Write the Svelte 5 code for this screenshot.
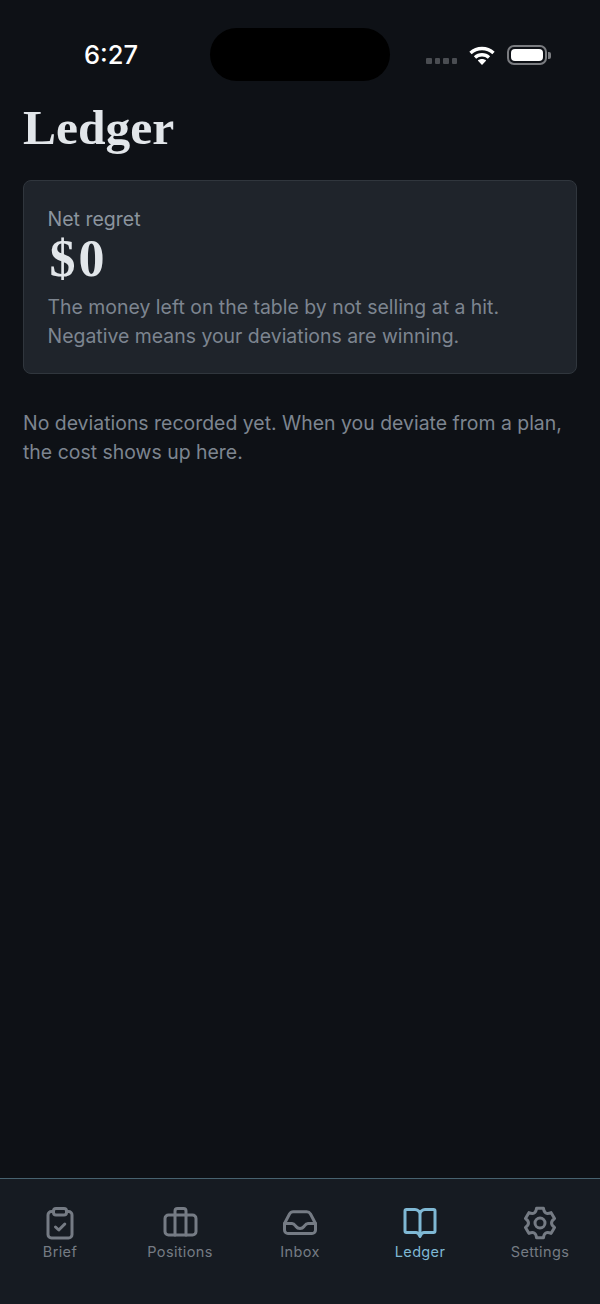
<script>
  const tabs = [
    { label: "Brief", id: "brief" },
    { label: "Positions", id: "positions" },
    { label: "Inbox", id: "inbox" },
    { label: "Ledger", id: "ledger", active: true },
    { label: "Settings", id: "settings" },
  ];

  // six rounded lobes around the centre of the settings icon
  function polar(r, deg) {
    const a = (deg * Math.PI) / 180;
    return `${(18 + r * Math.cos(a)).toFixed(2)} ${(18 + r * Math.sin(a)).toFixed(2)}`;
  }
  let cog = `M${polar(15.2, -103)}`;
  for (let k = 0; k < 6; k++) {
    const a = -90 + 60 * k;
    cog += `L${polar(15.2, a + 13)}Q${polar(8.5, a + 30)} ${polar(15.2, a + 47)}`;
  }
  cog += "Z";
</script>

<div class="screen">
  <div class="statusbar">
    <span class="time">6:27</span>
    <div class="island"></div>
    <div class="status-icons">
      <div class="signal"><i></i><i></i><i></i><i></i></div>
      <svg class="wifi" width="28" height="20" viewBox="0 0 28 20" fill="none" stroke="#fff" stroke-width="3.4">
        <path d="M2.5 8C9 2 19 2 25.500 8" />
        <path d="M7 12.500C11 8.800 17 8.800 21 12.500" />
        <path d="M14 20L9.800 15.600C12 13.600 16 13.600 18.200 15.600Z" fill="#fff" stroke="none" />
      </svg>
      <div class="battery"><div class="charge"></div></div>
      <div class="nub"></div>
    </div>
  </div>

  <main>
    <h1>Ledger</h1>
    <section class="card">
      <div class="label">Net regret</div>
      <div class="amount">$0</div>
      <p>The money left on the table by not selling at a hit.<br />Negative means your deviations are winning.</p>
    </section>
    <p class="empty">No deviations recorded yet. When you deviate from a plan, the cost shows up here.</p>
  </main>

  <nav>
    {#each tabs as tab}
      <div class="tab" class:active={tab.active}>
        <svg width="36" height="36" viewBox="0 0 36 36" fill="none" stroke="currentColor" stroke-width="3" stroke-linecap="round" stroke-linejoin="round">
          {#if tab.id === "brief"}
            <path d="M11.500 6.500H9.500A3.500 3.500 0 0 0 6 10V29.500A3.500 3.500 0 0 0 9.500 33H26.500A3.500 3.500 0 0 0 30 29.500V10A3.500 3.500 0 0 0 26.500 6.500H24.500" />
            <rect x="11.500" y="3.500" width="13" height="6.500" rx="2.500" />
            <path d="M13.500 22L16.800 25L22.800 19" />
          {:else if tab.id === "positions"}
            <rect x="3" y="10" width="31" height="20" rx="3.500" />
            <path d="M13 10V6A2.500 2.500 0 0 1 15.500 3.500H21.500A2.500 2.500 0 0 1 24 6V10" />
            <path d="M13 10V30M24 10V30" />
          {:else if tab.id === "inbox"}
            <path d="M2.500 18.500L7.500 9A4.500 4.500 0 0 1 11.500 6.800H24.500A4.500 4.500 0 0 1 28.500 9L33.500 18.500V25A3.500 3.500 0 0 1 30 28.500H6A3.500 3.500 0 0 1 2.500 25Z" />
            <path d="M2.500 18.500H10C12 18.500 12.500 19.500 14 21.500C15.500 23.500 16.500 23.500 18 23.500C19.500 23.500 20.500 23.500 22 21.500C23.500 19.500 24 18.500 26 18.500H33.500" />
          {:else if tab.id === "ledger"}
            <path d="M18 9C18 6.500 15.500 4.500 13 4.500H4.500A1.500 1.500 0 0 0 3 6V26A1.500 1.500 0 0 0 4.500 27.500H14C16 27.500 17 29 18 31.500C19 29 20 27.500 22 27.500H31.500A1.500 1.500 0 0 0 33 26V6A1.500 1.500 0 0 0 31.500 4.500H23C20.500 4.500 18 6.500 18 9V29" />
          {:else}
            <circle cx="18" cy="18" r="5" />
            <path d={cog} />
          {/if}
        </svg>
        <span>{tab.label}</span>
      </div>
    {/each}
  </nav>
</div>

<style>
  :global(body) {
    margin: 0;
    background: #0e1116;
  }
  .screen {
    height: 1304px;
    display: flex;
    flex-direction: column;
    background: #0e1116;
    font-family: Inter, "Liberation Sans", sans-serif;
    overflow: hidden;
  }
  .statusbar {
    height: 100px;
    flex: none;
    display: grid;
    grid-template-columns: 1fr 180px 1fr;
    align-items: start;
    padding-top: 28px;
    box-sizing: border-box;
  }
  .time {
    margin: 12px 0 0 84px;
    color: #fff;
    font-size: 25.500px;
    line-height: 30px;
    font-weight: 500;
  }
  .island {
    height: 53px;
    border-radius: 27px;
    background: #000;
  }
  .status-icons {
    display: flex;
    align-items: center;
    height: 20px;
    margin: 17px 49px 0 0;
    justify-content: flex-end;
  }
  .signal {
    display: flex;
    gap: 3px;
    margin: 12px 11px 0 0;
  }
  .signal i {
    width: 5.500px;
    height: 5.500px;
    border-radius: 1px;
    background: #4a4d52;
  }
  .wifi {
    margin-right: 11px;
  }
  .battery {
    width: 40px;
    height: 20px;
    box-sizing: border-box;
    padding: 2px;
    border: 2px solid #7a7c80;
    border-radius: 7px;
  }
  .charge {
    height: 100%;
    border-radius: 4px;
    background: #fff;
  }
  .nub {
    width: 3px;
    height: 7px;
    margin-left: 1px;
    border-radius: 0 2px 2px 0;
    background: #7a7c80;
  }
  main {
    flex: 1;
    padding: 0 23px;
  }
  h1 {
    margin: 0 0 25px;
    color: #e2e6ea;
    font-family: "Liberation Serif", serif;
    font-size: 49.500px;
    line-height: 55px;
    font-weight: 700;
  }
  .card {
    box-sizing: border-box;
    height: 194px;
    padding: 27px 23.500px 0;
    background: #1f242b;
    border: 1px solid #30363d;
    border-radius: 8px;
  }
  .label {
    color: #8b949e;
    font-size: 19.500px;
    line-height: 23px;
  }
  .amount {
    margin: 2px 0 0 2px;
    color: #e2e6ea;
    font-family: "Liberation Serif", serif;
    font-size: 52px;
    line-height: 52px;
    font-weight: 700;
    letter-spacing: 3px;
  }
  .card p {
    margin: 8px 0 0;
  }
  p {
    color: #7d8590;
    font-size: 19.450px;
    line-height: 29px;
  }
  .empty {
    margin: 35px 0 0;
  }
  nav {
    flex: none;
    height: 126px;
    box-sizing: border-box;
    display: grid;
    grid-template-columns: repeat(5, 1fr);
    padding-top: 26px;
    background: #161b22;
    border-top: 1px solid #47626f;
  }
  .tab {
    display: flex;
    flex-direction: column;
    align-items: center;
    color: #757b84;
  }
  .tab.active {
    color: #7fb8d4;
  }
  .tab span {
    margin-top: 2px;
    font-size: 14.500px;
    line-height: 18px;
    font-weight: 400;
    letter-spacing: 0.35px;
  }
</style>
